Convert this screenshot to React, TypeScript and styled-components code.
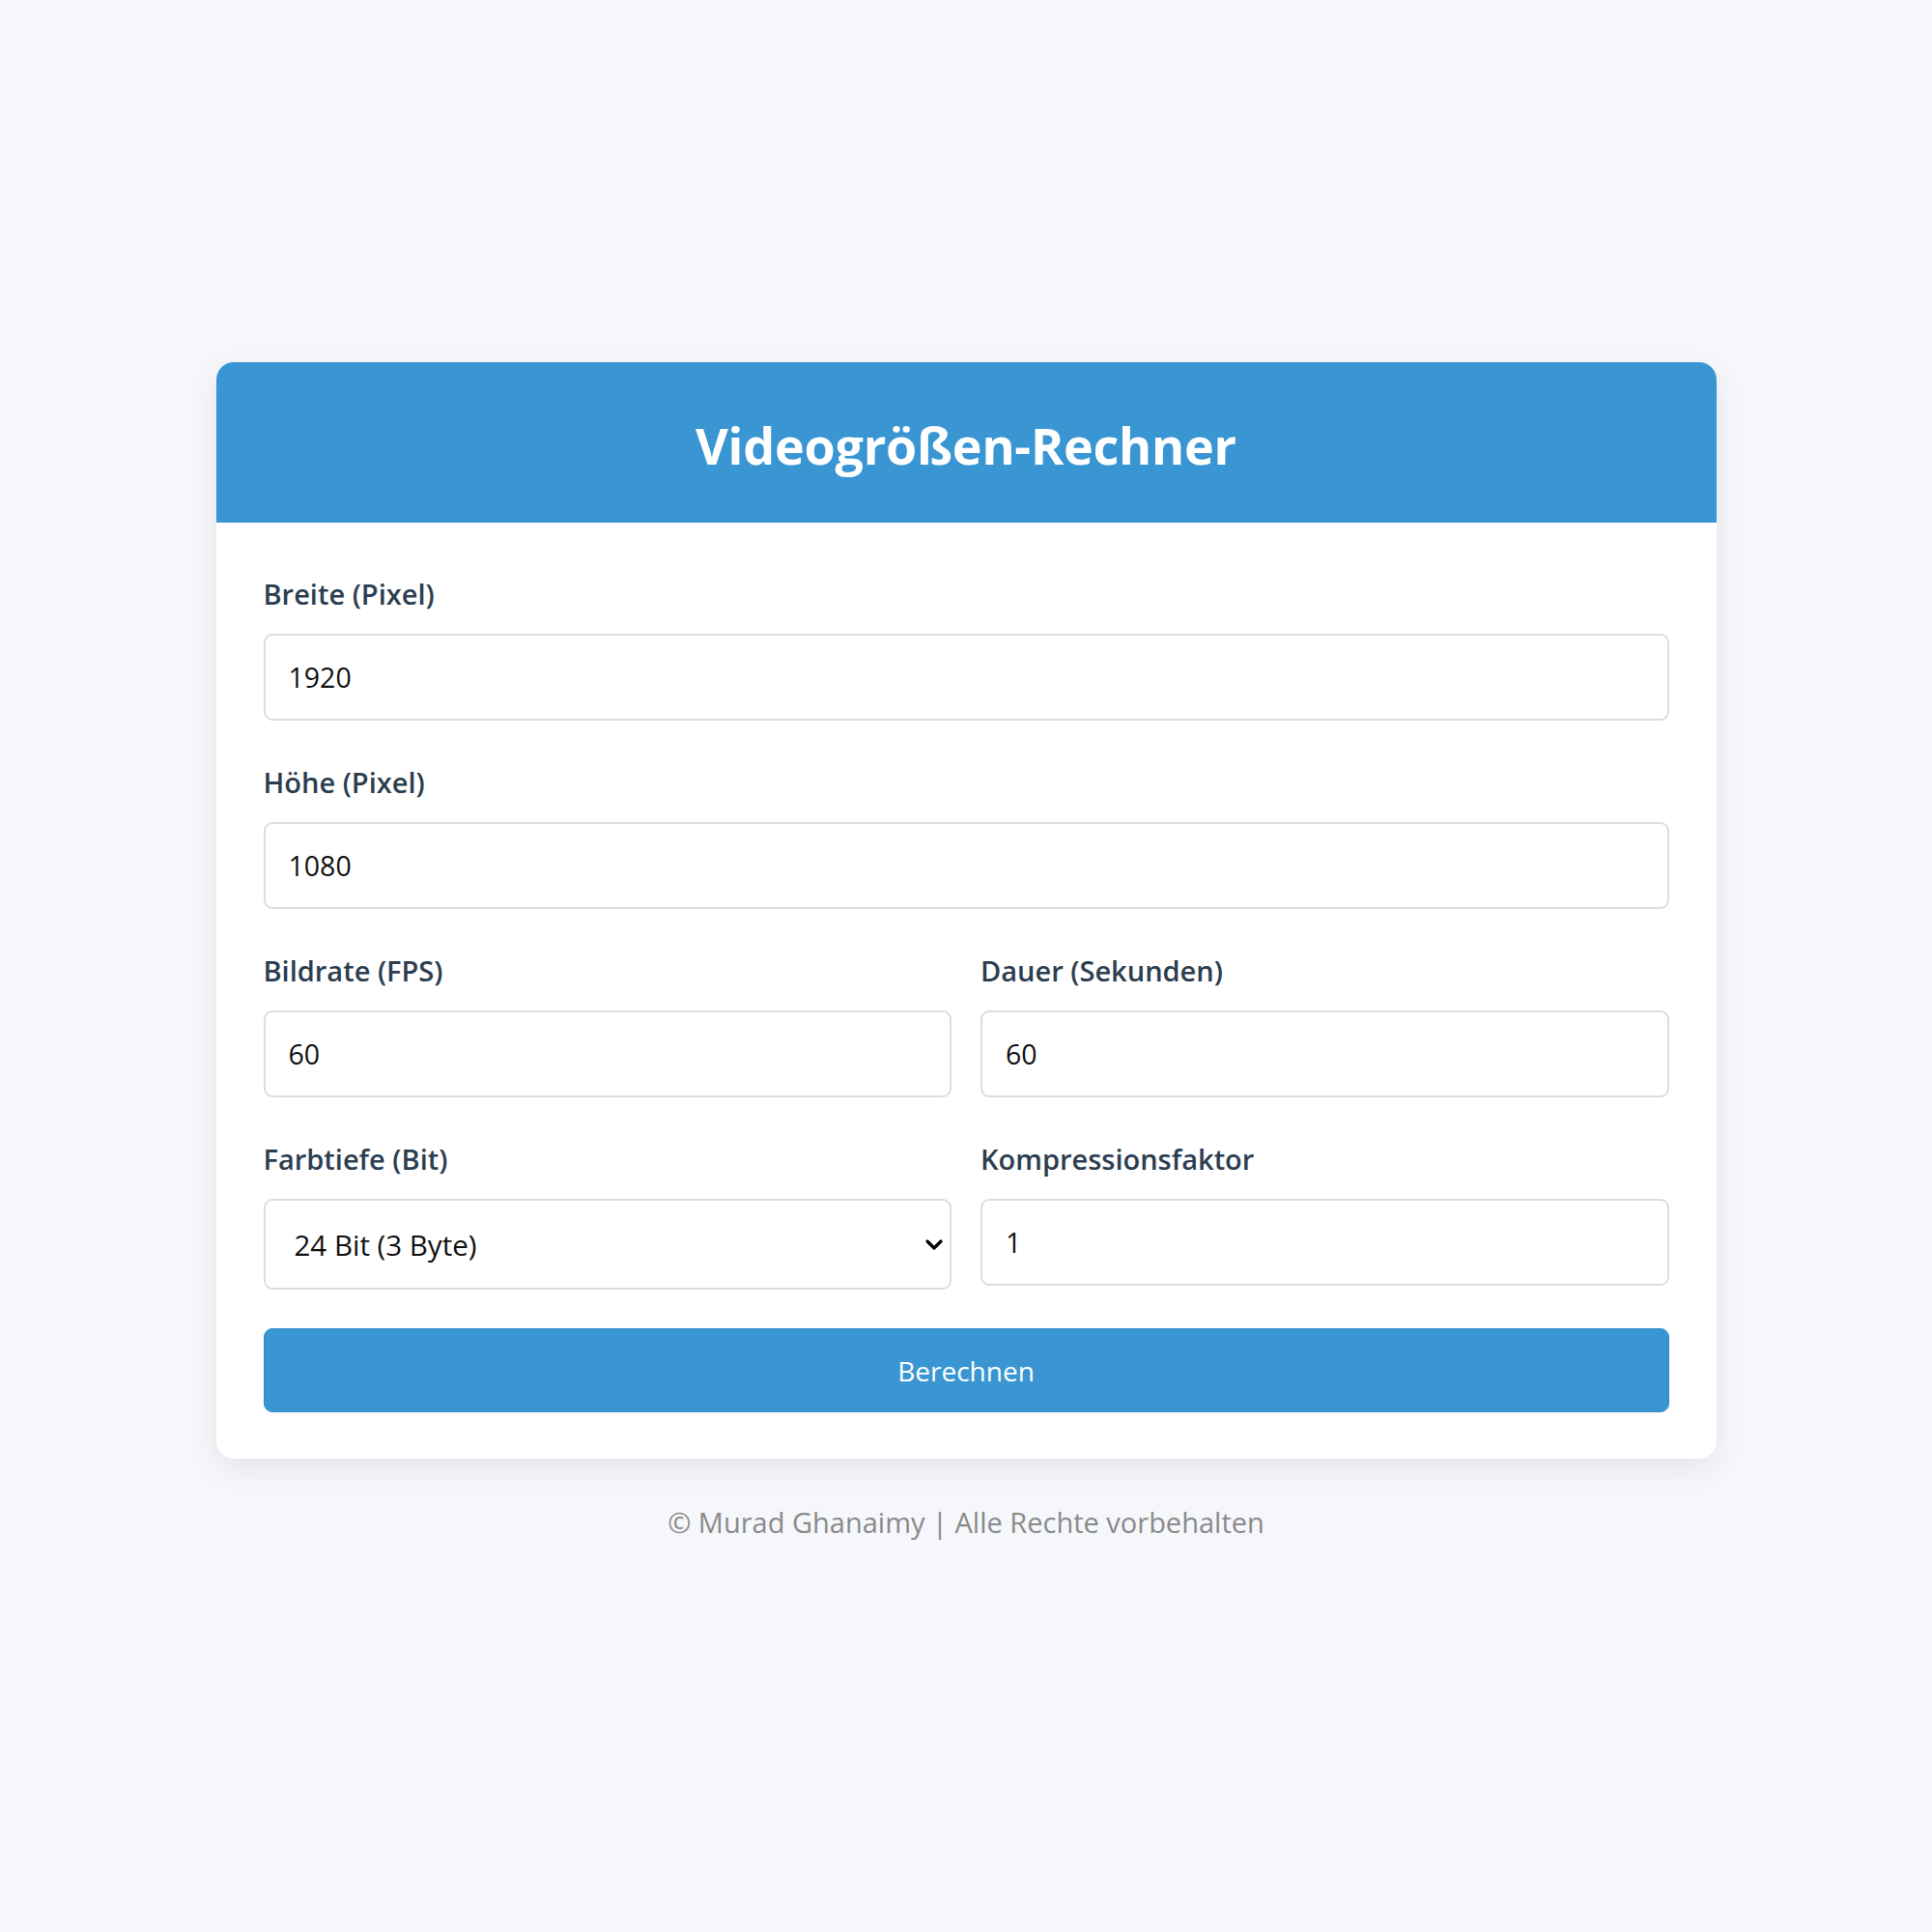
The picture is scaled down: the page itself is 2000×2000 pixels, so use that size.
import styled, { createGlobalStyle } from 'styled-components'

const GlobalStyle = createGlobalStyle`
  * {
    box-sizing: border-box;
  }
  body {
    margin: 0;
    background: #f5f7fa;
    font-family: 'Open Sans', 'Noto Sans', sans-serif;
  }
`

const colors = {
  primary: '#3a96d3',
  label: '#2c3e50',
  border: '#dddddd',
  footer: '#8a8a8a',
}

const App = () => {
  return (
    <>
      <GlobalStyle />
      <Page>
        <Card>
          <Header>
            <Title>Videogrößen-Rechner</Title>
          </Header>
          <Body>
            <Fields>
              <Field>
                <Label htmlFor="width">Breite (Pixel)</Label>
                <Input id="width" type="number" defaultValue={1920} />
              </Field>
              <Field>
                <Label htmlFor="height">Höhe (Pixel)</Label>
                <Input id="height" type="number" defaultValue={1080} />
              </Field>
              <Row>
                <Field>
                  <Label htmlFor="fps">Bildrate (FPS)</Label>
                  <Input id="fps" type="number" defaultValue={60} />
                </Field>
                <Field>
                  <Label htmlFor="duration">Dauer (Sekunden)</Label>
                  <Input id="duration" type="number" defaultValue={60} />
                </Field>
              </Row>
              <Row>
                <Field>
                  <Label htmlFor="depth">Farbtiefe (Bit)</Label>
                  <SelectWrap>
                    <Select id="depth" defaultValue="24">
                      <option value="8">8 Bit (1 Byte)</option>
                      <option value="16">16 Bit (2 Byte)</option>
                      <option value="24">24 Bit (3 Byte)</option>
                      <option value="32">32 Bit (4 Byte)</option>
                    </Select>
                    <Chevron width="20" height="13" viewBox="0 0 20 13">
                      <path d="M3 3 L10 10 L17 3" fill="none" stroke="#000" strokeWidth="3.2" strokeLinecap="round" strokeLinejoin="round" />
                    </Chevron>
                  </SelectWrap>
                </Field>
                <Field>
                  <Label htmlFor="compression">Kompressionsfaktor</Label>
                  <Input id="compression" type="number" defaultValue={1} />
                </Field>
              </Row>
            </Fields>
            <Button type="button">Berechnen</Button>
          </Body>
        </Card>
        <Footer>© Murad Ghanaimy | Alle Rechte vorbehalten</Footer>
      </Page>
    </>
  )
}

const Page = styled.div`
  min-height: 100vh;
  display: flex;
  flex-direction: column;
  align-items: center;
  justify-content: center;
  padding-bottom: 28px;
`
const Card = styled.div`
  width: 1553px;
  background: #fff;
  border-radius: 18px;
  overflow: hidden;
  box-shadow: 0 10px 32px rgba(0, 0, 0, 0.08);
`
const Header = styled.div`
  height: 166px;
  padding-top: 6px;
  background: ${colors.primary};
  display: flex;
  align-items: center;
  justify-content: center;
`
const Title = styled.h1`
  margin: 0;
  color: #fff;
  font-size: 52px;
  font-weight: 700;
  line-height: 1.2;
  letter-spacing: -0.2px;
`
const Body = styled.div`
  padding: 56px 49px 48px;
`
const Fields = styled.div`
  display: flex;
  flex-direction: column;
  gap: 46px;
`
const Row = styled.div`
  display: grid;
  grid-template-columns: 1fr 1fr;
  column-gap: 30px;
  align-items: start;
`
const Field = styled.div`
  display: flex;
  flex-direction: column;
`
const Label = styled.label`
  display: block;
  margin-bottom: 24px;
  color: ${colors.label};
  font-size: 29px;
  font-weight: 600;
  line-height: 35px;
`
const Input = styled.input`
  width: 100%;
  height: 90px;
  padding: 0 24px;
  border: 2px solid ${colors.border};
  border-radius: 9px;
  background: #fff;
  color: #111;
  font-family: 'Open Sans', 'Noto Sans', sans-serif;
  font-size: 28.5px;
  outline: none;
  -moz-appearance: textfield;

  &::-webkit-outer-spin-button,
  &::-webkit-inner-spin-button {
    -webkit-appearance: none;
    margin: 0;
  }
`
const SelectWrap = styled.div`
  position: relative;
`
const Select = styled.select`
  width: 100%;
  height: 94px;
  padding: 0 60px 0 30px;
  border: 2px solid ${colors.border};
  border-radius: 9px;
  background: #fff;
  color: #111;
  font-family: 'Open Sans', 'Noto Sans', sans-serif;
  font-size: 29.5px;
  appearance: none;
  -webkit-appearance: none;
  outline: none;
`
const Chevron = styled.svg`
  position: absolute;
  right: 8px;
  top: 41px;
  pointer-events: none;
`
const Button = styled.button`
  display: block;
  width: 100%;
  height: 87px;
  margin-top: 40px;
  border: 1px solid #2f8ccc;
  border-radius: 9px;
  background: ${colors.primary};
  color: #fff;
  font-family: 'Open Sans', 'Noto Sans', sans-serif;
  font-size: 28px;
  font-weight: 400;
  cursor: pointer;
`
const Footer = styled.p`
  margin: 45px 0 0;
  color: ${colors.footer};
  font-size: 29px;
  line-height: 42px;
`

export default App
